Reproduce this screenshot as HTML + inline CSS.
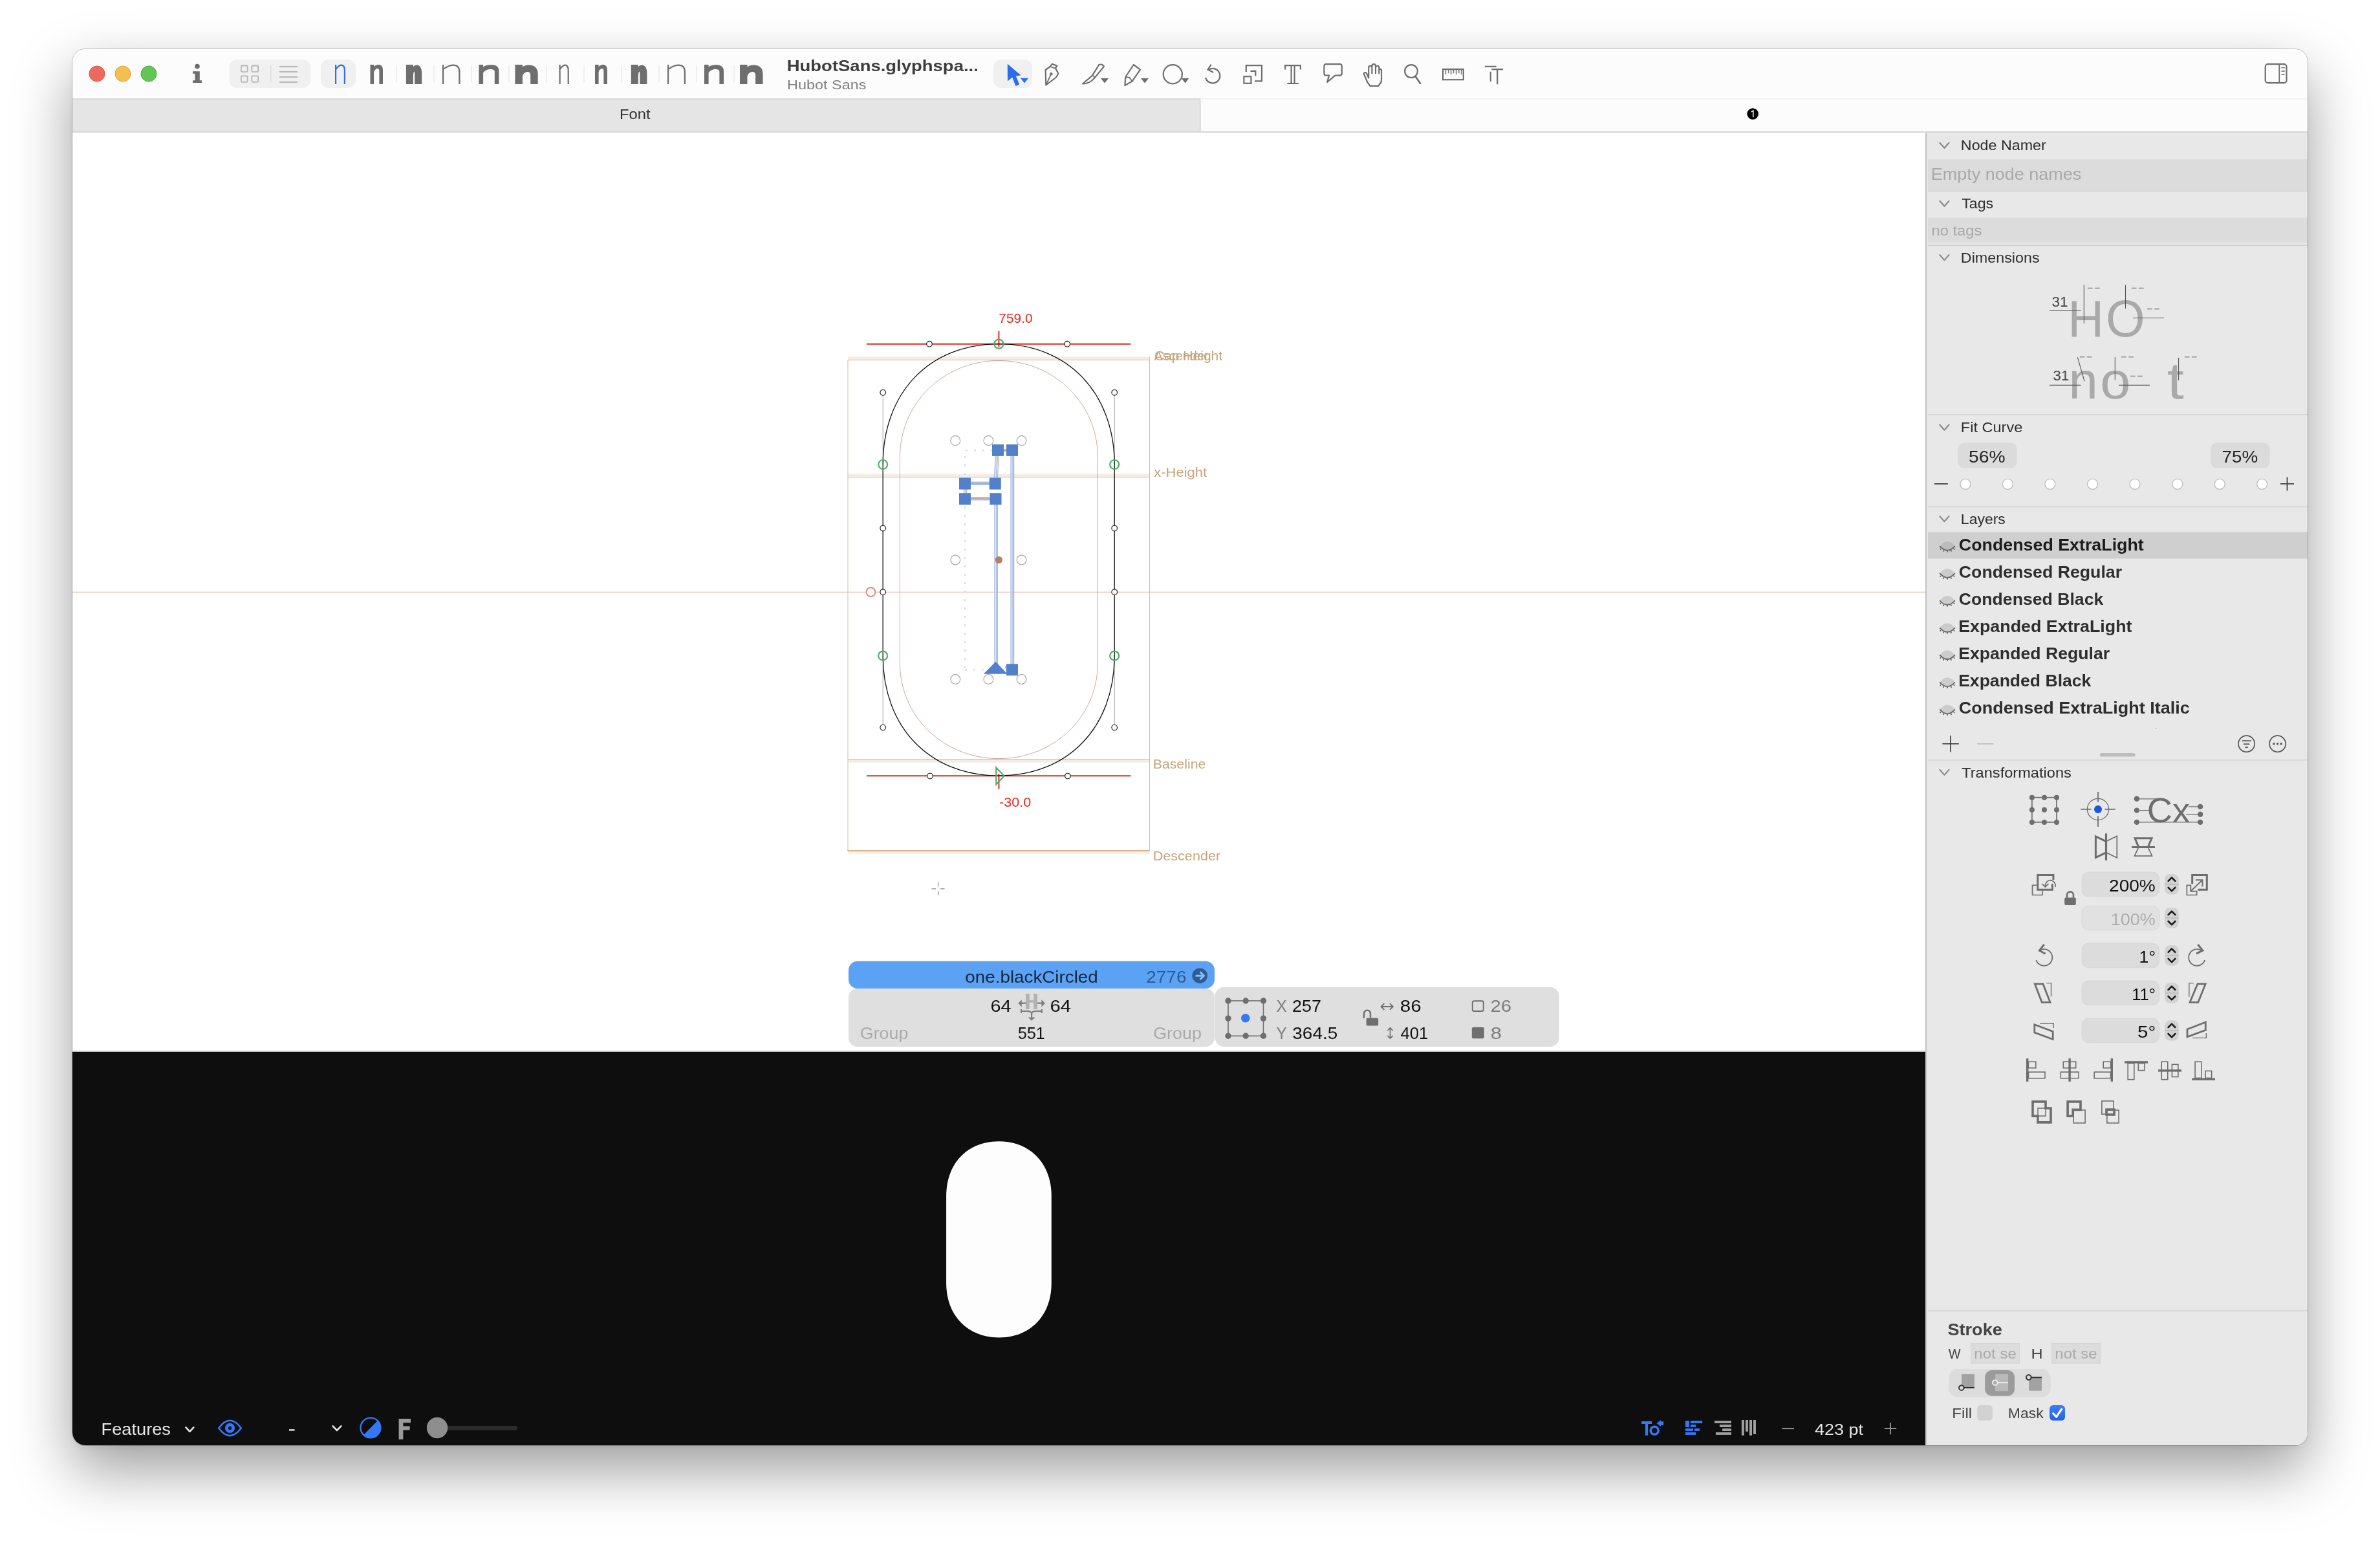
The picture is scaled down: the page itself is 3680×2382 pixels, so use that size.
<!DOCTYPE html>
<html><head><meta charset="utf-8"><title>Glyphs</title>
<style>
html,body{margin:0;padding:0;background:#fff;}
body{width:3680px;height:2382px;position:relative;overflow:hidden;font-family:"Liberation Sans",sans-serif;}
#shadow{position:absolute;left:112px;top:76px;width:3456px;height:2158px;border-radius:20px;
 box-shadow:0 0 0 1px rgba(0,0,0,0.20), 0 38px 90px rgba(0,0,0,0.39), 0 4px 8px rgba(0,0,0,0.05);background:#fcfcfc;}
svg{position:absolute;left:0;top:0;will-change:transform;font-family:"Liberation Sans",sans-serif;}
text{white-space:pre;}
</style></head><body>
<div id="shadow"></div>
<svg width="3680" height="2382" viewBox="0 0 3680 2382">
<defs><clipPath id="win"><rect x="112" y="76" width="3456" height="2158" rx="20"/></clipPath></defs>
<g clip-path="url(#win)">
<rect x="112" y="76" width="3456" height="2158" fill="#fcfcfc"/>
<rect x="112" y="152" width="1744" height="53" fill="#e5e5e5"/>
<rect x="112" y="152" width="1744" height="2" fill="#d9d9d9"/>
<rect x="1856" y="152" width="1712" height="1.5" fill="#efefef"/>
<rect x="1855" y="154" width="1.5" height="50" fill="#d0d0d0"/>
<rect x="112" y="203" width="3456" height="2" fill="#d6d6d6"/>
<rect x="112" y="205" width="2865" height="1419" fill="#ffffff"/>
<rect x="112" y="1624" width="2865" height="2" fill="#c4c4c4"/>
<rect x="112" y="1626" width="2865" height="608" fill="#0e0e0e"/>
<rect x="2977" y="205" width="2" height="2029" fill="#c2c2c2"/>
<rect x="2979" y="205" width="589" height="2029" fill="#e8e8e8"/>
<circle cx="150" cy="114" r="12" fill="#ed6a5e" stroke="#d5564a" stroke-width="1"/>
<circle cx="190" cy="114" r="12" fill="#f5bf4f" stroke="#d9a33b" stroke-width="1"/>
<circle cx="230" cy="114" r="12" fill="#62c554" stroke="#4faa3f" stroke-width="1"/>
<circle cx="305" cy="102.6" r="3.8" fill="#6e6e6e"/>
<path d="M298 110.2H308.8V124.3H312V128H298V124.3H301.5V113.8H298Z" fill="#6e6e6e"/>
<rect x="354.5" y="92" width="125.5" height="44" fill="#f0f0f0" rx="12"/>
<rect x="372.9" y="101.5" width="9.8" height="9.6" fill="none" rx="1.5" stroke="#b6b6b6" stroke-width="1.8"/>
<rect x="389.4" y="101.5" width="9.8" height="9.6" fill="none" rx="1.5" stroke="#b6b6b6" stroke-width="1.8"/>
<rect x="372.9" y="117.3" width="9.8" height="9.6" fill="none" rx="1.5" stroke="#b6b6b6" stroke-width="1.8"/>
<rect x="389.4" y="117.3" width="9.8" height="9.6" fill="none" rx="1.5" stroke="#b6b6b6" stroke-width="1.8"/>
<rect x="418" y="100.5" width="1.5" height="27" fill="#dedede"/>
<path d="M432 103L460 103" stroke="#b6b6b6" stroke-width="2" fill="none" />
<path d="M432 111L460 111" stroke="#b6b6b6" stroke-width="2" fill="none" />
<path d="M432 119L460 119" stroke="#b6b6b6" stroke-width="2" fill="none" />
<path d="M432 127L460 127" stroke="#b6b6b6" stroke-width="2" fill="none" />
<rect x="496" y="92" width="54" height="44" fill="#f0f0f0" rx="12"/>
<path d="M519.1 130V100M519.1 107.2C522.96 102.2 524.9 100.7 527.38 100.7C531.24 100.7 532.9 104.5 532.9 108.76V130" fill="none" stroke="#2a6ff0" stroke-width="2.2"/>
<path d="M572.5 130V100H578.1V103.2C581.58 99.2 592 97.5 592 108.1V130H586.4V109.6C586.4 104.2 579.76 105.2 578.1 111.6V130Z" fill="#6e6e6e"/>
<path d="M627.9 130V100H638.9V103.2C642.23 99.2 652.2 97.5 652.2 113.5V130H641.2V115C641.2 108.25 639.36 109.25 638.9 117V130Z" fill="#6e6e6e"/>
<path d="M685.1 130V100M685.1 107.2C692.18 102.2 695.73 100.7 700.28 100.7C707.36 100.7 710.4 104.5 710.4 111V130" fill="none" stroke="#6e6e6e" stroke-width="2.2"/>
<path d="M740.5 130V100H747.1V103.2C753.18 99.2 771.4 97.5 771.4 109.1V130H764.8V110.6C764.8 104.95 750.64 105.95 747.1 112.6V130Z" fill="#6e6e6e"/>
<path d="M796.4 130V100H807.9V103.2C813.85 99.2 831.7 97.5 831.7 114V130H820.2V115.5C820.2 108.62 810.36 109.62 807.9 117.5V130Z" fill="#6e6e6e"/>
<path d="M865.6 130V100M865.6 107.2C869.27 102.2 871.1 100.7 873.46 100.7C877.13 100.7 878.7 104.5 878.7 108.57V130" fill="none" stroke="#6e6e6e" stroke-width="2.2"/>
<path d="M920 130V100H925.6V103.2C928.95 99.2 939 97.5 939 108.1V130H933.4V109.6C933.4 104.2 927.16 105.2 925.6 111.6V130Z" fill="#6e6e6e"/>
<path d="M975.8 130V100H986.8V103.2C990.2 99.2 1000.4 97.5 1000.4 113.5V130H989.4V115C989.4 108.25 987.32 109.25 986.8 117V130Z" fill="#6e6e6e"/>
<path d="M1033.1 130V100M1033.1 107.2C1040.32 102.2 1043.94 100.7 1048.58 100.7C1055.8 100.7 1058.9 104.5 1058.9 111V130" fill="none" stroke="#6e6e6e" stroke-width="2.2"/>
<path d="M1089 130V100H1095.6V103.2C1101.45 99.2 1119 97.5 1119 109.1V130H1112.4V110.6C1112.4 104.95 1098.96 105.95 1095.6 112.6V130Z" fill="#6e6e6e"/>
<path d="M1144 130V100H1155.5V103.2C1161.53 99.2 1179.6 97.5 1179.6 114V130H1168.1V115.5C1168.1 108.62 1158.02 109.62 1155.5 117.5V130Z" fill="#6e6e6e"/>
<rect x="612.2" y="100.5" width="1.6" height="27" fill="#ececec"/>
<rect x="670.2" y="100.5" width="1.6" height="27" fill="#ececec"/>
<rect x="728.2" y="100.5" width="1.6" height="27" fill="#ececec"/>
<rect x="786.2" y="100.5" width="1.6" height="27" fill="#ececec"/>
<rect x="844.2" y="100.5" width="1.6" height="27" fill="#ececec"/>
<rect x="902.2" y="100.5" width="1.6" height="27" fill="#ececec"/>
<rect x="960.2" y="100.5" width="1.6" height="27" fill="#ececec"/>
<rect x="1018.2" y="100.5" width="1.6" height="27" fill="#ececec"/>
<rect x="1076.2" y="100.5" width="1.6" height="27" fill="#ececec"/>
<rect x="1134.2" y="100.5" width="1.6" height="27" fill="#ececec"/>
<text x="1216.71" y="109.8" font-size="24.5" fill="#3d3d3d" textLength="296.12" lengthAdjust="spacingAndGlyphs" font-weight="bold">HubotSans.glyphspa...</text>
<text x="1217.13" y="138.2" font-size="20.5" fill="#808080" textLength="122.21" lengthAdjust="spacingAndGlyphs">Hubot Sans</text>
<rect x="1536" y="92" width="60" height="44" fill="#f0f0f0" rx="12"/>
<path d="M1557.8 98.7L1558 125.6L1565.2 119.6L1570.6 133.1L1576.2 130.6L1570.8 117.6L1578.6 116.6Z" fill="#2a6cf0"/>
<path d="M1578 120.7H1590L1584 128.5Z" fill="#2a6cf0"/>
<path d="M1617.3 131.5L1616.6 108L1623.6 103L1626.8 98.9L1634.3 101.8L1632 105.6L1636.4 113.8L1633 119.5Z" fill="none" stroke="#6e6e6e" stroke-width="2.2" stroke-linejoin="round"/>
<path d="M1623.6 103L1632 105.6" fill="none" stroke="#6e6e6e" stroke-width="1.8"/>
<path d="M1617.6 131L1625 114.8" stroke="#6e6e6e" stroke-width="1.8" fill="none" />
<circle cx="1625.3" cy="114.2" r="2.3" fill="#6e6e6e"/>
<path d="M1699.4 100Q1704.5 98.4 1707 102.6L1692.3 120.6Q1685 129.4 1674 129.5L1688.6 117.2Z" fill="none" stroke="#6e6e6e" stroke-width="2.2" stroke-linejoin="round"/>
<path d="M1688.6 117.2Q1692 116.5 1692.3 120.6" fill="none" stroke="#6e6e6e" stroke-width="1.8"/>
<path d="M1702 121H1714L1708 128.5Z" fill="#6e6e6e"/>
<path d="M1752.8 100L1763 107.6L1750.6 125.6L1739.4 132L1740.3 119Z" fill="none" stroke="#6e6e6e" stroke-width="2.2" stroke-linejoin="round"/>
<path d="M1740.3 119L1746.6 120L1750.6 125.6" fill="none" stroke="#6e6e6e" stroke-width="1.8" stroke-linejoin="round"/>
<path d="M1764 121H1776L1770 128.5Z" fill="#6e6e6e"/>
<circle cx="1813.3" cy="114.75" r="14.6" fill="none" stroke="#6e6e6e" stroke-width="2.2"/>
<path d="M1826.8 121H1838.4L1832.6 128.5Z" fill="#6e6e6e"/>
<path d="M1868.04 108.3A11.3 11.3 0 1 1 1864.09 120.12" fill="none" stroke="#6e6e6e" stroke-width="2.2"/>
<path d="M1872.8 99.6L1867.6 107.6L1876.2 112" fill="none" stroke="#6e6e6e" stroke-width="2.2" stroke-linejoin="miter"/>
<rect x="1923.4" y="118.2" width="11" height="10.6" fill="none" stroke="#6e6e6e" stroke-width="2.2"/>
<path d="M1926.8 111V101.2H1951V125.4H1940" fill="none" stroke="#6e6e6e" stroke-width="2.2"/>
<path d="M1933.5 109.8H1941.3V117.6" fill="none" stroke="#6e6e6e" stroke-width="2.2"/>
<path d="M1987.1 107.6V101.2H2010.9V107.6M1996.6 101.2V129M2001.6 101.2V129M1990.4 129H2007.8" fill="none" stroke="#6e6e6e" stroke-width="2.2"/>
<path d="M2050.5 99.2H2071.5Q2074.8 99.2 2074.8 102.5V113.3Q2074.8 116.6 2071.5 116.6H2064.5L2052.2 126.8L2055 116.6H2050.5Q2047.4 116.6 2047.4 113.3V102.5Q2047.4 99.2 2050.5 99.2Z" fill="none" stroke="#6e6e6e" stroke-width="2.2" stroke-linejoin="round"/>
<path d="M2116.2 116V104.4a2.6 2.6 0 0 1 5.2 0V113.5M2121.4 104.4V102a2.8 2.8 0 0 1 5.6 0V113.5M2127 104.4a2.65 2.65 0 0 1 5.3 0V113.5M2132.3 108.8a1.85 1.85 0 0 1 3.7 0V123.5Q2136 128 2133.2 130L2131.6 132.8H2118.4L2114.2 127L2109.2 115Q2108.4 112.4 2110.6 112Q2112.6 111.8 2113.6 114.4L2116.2 120.5V116" fill="none" stroke="#6e6e6e" stroke-width="2.2" stroke-linejoin="round" stroke-linecap="round"/>
<circle cx="2182" cy="110.1" r="9.9" fill="none" stroke="#6e6e6e" stroke-width="2.2"/>
<path d="M2188.4 117.8L2196.6 129.8" stroke="#6e6e6e" stroke-width="2.6" fill="none" />
<rect x="2231.1" y="107" width="31.7" height="16.2" fill="none" stroke="#6e6e6e" stroke-width="2.2"/>
<path d="M2235.4 107L2235.4 115.3" stroke="#6e6e6e" stroke-width="1.5" fill="none" />
<path d="M2239.6 107L2239.6 113.2" stroke="#6e6e6e" stroke-width="1.5" fill="none" />
<path d="M2243.6 107L2243.6 115.3" stroke="#6e6e6e" stroke-width="1.5" fill="none" />
<path d="M2247.6 107L2247.6 113.2" stroke="#6e6e6e" stroke-width="1.5" fill="none" />
<path d="M2251.6 107L2251.6 115.3" stroke="#6e6e6e" stroke-width="1.5" fill="none" />
<path d="M2255.8 107L2255.8 113.2" stroke="#6e6e6e" stroke-width="1.5" fill="none" />
<path d="M2259.6 107L2259.6 115.3" stroke="#6e6e6e" stroke-width="1.5" fill="none" />
<path d="M2295.8 102.9H2313.6M2304.8 110.8V126M2306.3 107.2H2324.1M2315.2 107.2V130.2" fill="none" stroke="#6e6e6e" stroke-width="2.2"/>
<rect x="3502.7" y="99.2" width="32.8" height="29" fill="none" rx="4" stroke="#6e6e6e" stroke-width="2.2"/>
<path d="M3524.3 99L3524.3 128.4" stroke="#6e6e6e" stroke-width="1.8" fill="none" />
<path d="M3527.4 104.6L3532.8 104.6" stroke="#6e6e6e" stroke-width="1.4" fill="none" />
<path d="M3527.4 110L3532.8 110" stroke="#6e6e6e" stroke-width="1.4" fill="none" />
<path d="M3527.4 115.4L3532.8 115.4" stroke="#6e6e6e" stroke-width="1.4" fill="none" />
<text x="958.1" y="184" font-size="22.3" fill="#333" textLength="47.54" lengthAdjust="spacingAndGlyphs">Font</text>
<circle cx="2710.2" cy="176" r="8.8" fill="#000"/>
<path d="M2708 172.8L2710.8 171V181.2" fill="none" stroke="#fff" stroke-width="1.5"/>
<rect x="1311" y="551.3" width="466.5" height="4.8" fill="#f4ede6"/>
<rect x="1311" y="732.7" width="466.5" height="4.4" fill="#f4ede6"/>
<rect x="1311" y="1174" width="466.5" height="4.7" fill="#f4ede6"/>
<rect x="1311" y="1315.9" width="466.5" height="3.8" fill="#f4ede6"/>
<path d="M1311 556L1311 1314.9" stroke="#e6d3c0" stroke-width="1.6" fill="none" />
<path d="M1777.5 551.5L1777.5 1314.9" stroke="#dcc0a0" stroke-width="1.1" fill="none" />
<path d="M1310.5 556.5L1778 556.5" stroke="#d9b68e" stroke-width="1" fill="none" />
<path d="M1310.5 737.5L1778 737.5" stroke="#d9b68e" stroke-width="1" fill="none" />
<path d="M1310.5 1173.5L1778 1173.5" stroke="#d9b68e" stroke-width="1" fill="none" />
<path d="M1310.5 1314.9L1778 1314.9" stroke="#d4b28a" stroke-width="2" fill="none" />
<text x="1784.4" y="557.2" font-size="19.8" fill="#c7a37b" textLength="84.29" lengthAdjust="spacingAndGlyphs">Ascender</text>
<text x="1784.95" y="557.2" font-size="19.8" fill="#c7a37b" textLength="105.17" lengthAdjust="spacingAndGlyphs">Cap Height</text>
<text x="1784.18" y="737.2" font-size="19.8" fill="#c7a37b" textLength="81.96" lengthAdjust="spacingAndGlyphs">x-Height</text>
<text x="1782.7" y="1187.5" font-size="19.8" fill="#c7a37b" textLength="81.63" lengthAdjust="spacingAndGlyphs">Baseline</text>
<text x="1782.67" y="1329.7" font-size="19.8" fill="#c7a37b" textLength="104.48" lengthAdjust="spacingAndGlyphs">Descender</text>
<path d="M112 915.3L2977 915.3" stroke="#ecb0a3" stroke-width="1.1" fill="none" />
<circle cx="1346.5" cy="915.2" r="6.9" fill="#fff" stroke="#de8a7c" stroke-width="2"/>
<path d="M1340 531.7L1748.5 531.7" stroke="#e8291c" stroke-width="2" fill="none" />
<path d="M1544.4 512L1544.4 536" stroke="#e8291c" stroke-width="2" fill="none" />
<text x="1544.35" y="499.4" font-size="20.5" fill="#e8291c" textLength="52.33" lengthAdjust="spacingAndGlyphs">759.0</text>
<path d="M1340 1199.3L1748.5 1199.3" stroke="#e8291c" stroke-width="2" fill="none" />
<path d="M1544.4 1196L1544.4 1219.8" stroke="#e8291c" stroke-width="2" fill="none" />
<text x="1545.08" y="1246.6" font-size="20.5" fill="#e8291c" textLength="49.27" lengthAdjust="spacingAndGlyphs">-30.0</text>
<path d="M1391.5 706C1391.5 624 1458.4 557.5 1544.4 557.5C1630.4 557.5 1697.3 624 1697.3 706V1025.5C1697.3 1107 1630.4 1172.6 1544.4 1172.6C1458.4 1172.6 1391.5 1107 1391.5 1025.5Z" fill="none" stroke="#d2a5a1" stroke-width="1"/>
<path d="M1365.2 606.8L1365.2 718" stroke="#9a9a9a" stroke-width="0.9" fill="none" />
<path d="M1723.2 606.8L1723.2 718" stroke="#9a9a9a" stroke-width="0.9" fill="none" />
<path d="M1365.2 1013.6L1365.2 1124.6" stroke="#9a9a9a" stroke-width="0.9" fill="none" />
<path d="M1723.2 1013.6L1723.2 1124.6" stroke="#9a9a9a" stroke-width="0.9" fill="none" />
<path d="M1365.2 718C1365.2 606.8 1437 531.7 1544.4 531.7C1650.2 531.7 1723.2 606.8 1723.2 718V1013.6C1723.2 1124.6 1651 1199.1 1544.4 1199.1C1438 1199.1 1365.2 1124.6 1365.2 1013.6Z" fill="none" stroke="#111" stroke-width="1.3"/>
<circle cx="1437" cy="531.7" r="4.3" fill="#fff" stroke="#111" stroke-width="1.15"/>
<circle cx="1650.2" cy="531.7" r="4.3" fill="#fff" stroke="#111" stroke-width="1.15"/>
<circle cx="1365.2" cy="606.8" r="4.3" fill="#fff" stroke="#111" stroke-width="1.15"/>
<circle cx="1723.2" cy="606.8" r="4.3" fill="#fff" stroke="#111" stroke-width="1.15"/>
<circle cx="1365.2" cy="816.5" r="4.3" fill="#fff" stroke="#111" stroke-width="1.15"/>
<circle cx="1723.2" cy="816.5" r="4.3" fill="#fff" stroke="#111" stroke-width="1.15"/>
<circle cx="1365.2" cy="915.2" r="4.3" fill="#fff" stroke="#111" stroke-width="1.15"/>
<circle cx="1723.2" cy="915.2" r="4.3" fill="#fff" stroke="#111" stroke-width="1.15"/>
<circle cx="1365.2" cy="1124.6" r="4.3" fill="#fff" stroke="#111" stroke-width="1.15"/>
<circle cx="1723.2" cy="1124.6" r="4.3" fill="#fff" stroke="#111" stroke-width="1.15"/>
<circle cx="1438" cy="1199.5" r="4.3" fill="#fff" stroke="#111" stroke-width="1.15"/>
<circle cx="1651" cy="1199.5" r="4.3" fill="#fff" stroke="#111" stroke-width="1.15"/>
<circle cx="1544.4" cy="531.7" r="7" fill="none" stroke="#4caf6e" stroke-width="2.2"/>
<circle cx="1365.2" cy="718" r="7" fill="none" stroke="#4caf6e" stroke-width="2.2"/>
<circle cx="1723.2" cy="718" r="7" fill="none" stroke="#4caf6e" stroke-width="2.2"/>
<circle cx="1365.2" cy="1013.6" r="7" fill="none" stroke="#4caf6e" stroke-width="2.2"/>
<circle cx="1723.2" cy="1013.6" r="7" fill="none" stroke="#4caf6e" stroke-width="2.2"/>
<path d="M1540.3 1186.4L1552.6 1199.4L1540.3 1212.4Z" fill="none" stroke="#4caf6e" stroke-width="2.2"/>
<path d="M1491.9 705.2V1034M1493.1 696.1H1536M1492.2 1035.3H1524" fill="none" stroke="#cccccc" stroke-width="1.7" stroke-dasharray="2.6 10.4"/>
<path d="M1539.4 775L1539.4 1030" stroke="#aac1e4" stroke-width="4.3" fill="none" />
<path d="M1539.4 775L1539.4 1030" stroke="#dfe8f5" stroke-width="1.4" fill="none" />
<path d="M1542.35 775L1542.35 1030" stroke="#cfa496" stroke-width="1.1" fill="none" />
<path d="M1564.6 700L1564.6 1030" stroke="#aac1e4" stroke-width="4.6" fill="none" />
<path d="M1564.6 700L1564.6 1030" stroke="#dfe8f5" stroke-width="1.4" fill="none" />
<path d="M1567.7 700L1567.7 1030" stroke="#cfa496" stroke-width="1.1" fill="none" />
<path d="M1541.4 700L1538.6 742" stroke="#aac1e4" stroke-width="4.4" fill="none" />
<path d="M1541.4 700L1538.6 742" stroke="#dfe8f5" stroke-width="1.4" fill="none" />
<path d="M1544.5 700L1542.2 742" stroke="#cfa496" stroke-width="1" fill="none" />
<path d="M1498 747.2L1532 747.2" stroke="#aac1e4" stroke-width="5.4" fill="none" />
<path d="M1498 747.3L1532 747.3" stroke="#cfa496" stroke-width="1.2" fill="none" />
<path d="M1498 770.7L1532 770.7" stroke="#aac1e4" stroke-width="5.4" fill="none" />
<path d="M1498 770.8L1532 770.8" stroke="#cfa496" stroke-width="1.2" fill="none" />
<path d="M1551 696.2L1557 696.2" stroke="#aac1e4" stroke-width="4.5" fill="none" />
<path d="M1551 696.3L1557 696.3" stroke="#cfa496" stroke-width="1.2" fill="none" />
<path d="M1554 1031.5L1557 1031.5" stroke="#aac1e4" stroke-width="3" fill="none" />
<path d="M1492 755L1492 764" stroke="#aac1e4" stroke-width="4" fill="none" />
<path d="M1492 755L1492 764" stroke="#dfe8f5" stroke-width="1.4" fill="none" />
<path d="M1494.8 755L1494.8 764" stroke="#cfa496" stroke-width="1.1" fill="none" />
<circle cx="1477.3" cy="681.1" r="7.4" fill="#fff" stroke="#a9a9a9" stroke-width="1.2"/>
<circle cx="1477.3" cy="865.5" r="7.4" fill="#fff" stroke="#a9a9a9" stroke-width="1.2"/>
<circle cx="1477.3" cy="1050" r="7.4" fill="#fff" stroke="#a9a9a9" stroke-width="1.2"/>
<circle cx="1528.4" cy="681.1" r="7.4" fill="#fff" stroke="#a9a9a9" stroke-width="1.2"/>
<circle cx="1528.4" cy="1050" r="7.4" fill="#fff" stroke="#a9a9a9" stroke-width="1.2"/>
<circle cx="1579.5" cy="681.1" r="7.4" fill="#fff" stroke="#a9a9a9" stroke-width="1.2"/>
<circle cx="1579.5" cy="865.5" r="7.4" fill="#fff" stroke="#a9a9a9" stroke-width="1.2"/>
<circle cx="1579.5" cy="1050" r="7.4" fill="#fff" stroke="#a9a9a9" stroke-width="1.2"/>
<circle cx="1544.4" cy="865.5" r="5.6" fill="#b08462"/>
<rect x="1534" y="686.9" width="18" height="18" fill="#5380cb"/>
<rect x="1556" y="686.9" width="18" height="18" fill="#5380cb"/>
<rect x="1483" y="738.6" width="18" height="18" fill="#5380cb"/>
<rect x="1529.8" y="738.6" width="18" height="18" fill="#5380cb"/>
<rect x="1483" y="762.2" width="18" height="18" fill="#5380cb"/>
<rect x="1530.5" y="762.2" width="18" height="18" fill="#5380cb"/>
<rect x="1556" y="1026.3" width="18" height="18" fill="#5380cb"/>
<path d="M1520.7 1041.8L1539.5 1022.7L1557.7 1041.8Z" fill="#5380cb"/>
<path d="M1440.6 1373.9H1447M1454 1373.9H1460.6M1450.6 1364V1370.4M1450.6 1377.4V1383.8" fill="none" stroke="#8a8a8a" stroke-width="1.3"/>
<rect x="1312" y="1527.6" width="566" height="90.5" fill="#dfdfdf" rx="14"/>
<rect x="1878.6" y="1525.8" width="532.2" height="92.3" fill="#dfdfdf" rx="14"/>
<rect x="1312" y="1485.7" width="566" height="42.3" fill="#5ba2f4" rx="14"/>
<text x="1492.39" y="1518.5" font-size="26" fill="#16263c" textLength="205.36" lengthAdjust="spacingAndGlyphs">one.blackCircled</text>
<text x="1772.3" y="1518.5" font-size="26" fill="#2d5b96" textLength="62.15" lengthAdjust="spacingAndGlyphs">2776</text>
<circle cx="1855.2" cy="1508.2" r="11.8" fill="#2d5b96"/>
<path d="M1848.6 1508.2H1861M1855.6 1502.4L1861.4 1508.2L1855.6 1514" fill="none" stroke="#8bbcf3" stroke-width="3" stroke-linejoin="miter"/>
<text x="1531.56" y="1563.8" font-size="25.5" fill="#111" textLength="32" lengthAdjust="spacingAndGlyphs">64</text>
<text x="1623.53" y="1563.8" font-size="25.5" fill="#111" textLength="32.64" lengthAdjust="spacingAndGlyphs">64</text>
<text x="1574.11" y="1605.7" font-size="25.5" fill="#111" textLength="41.4" lengthAdjust="spacingAndGlyphs">551</text>
<text x="1329.86" y="1605.7" font-size="25.5" fill="#aaaaaa" textLength="74.46" lengthAdjust="spacingAndGlyphs">Group</text>
<text x="1783.15" y="1605.7" font-size="25.5" fill="#aaaaaa" textLength="74.98" lengthAdjust="spacingAndGlyphs">Group</text>
<rect x="1586.1" y="1536.1" width="5.7" height="23.9" fill="#b2b2b2"/>
<rect x="1598.3" y="1536.1" width="5.7" height="23.9" fill="#b2b2b2"/>
<rect x="1586.1" y="1546.2" width="17.9" height="3.4" fill="#b2b2b2"/>
<path d="M1574.3 1550.7L1579.8 1545.2V1549.6H1586.1V1551.8H1579.8V1556.5Z" fill="#7e7e7e"/>
<path d="M1616 1550.7L1610.4 1545.2V1549.6H1604V1551.8H1610.4V1556.5Z" fill="#7e7e7e"/>
<path d="M1579 1560.1V1565.9M1610.9 1560.1V1565.9" fill="none" stroke="#7e7e7e" stroke-width="2"/>
<path d="M1579 1563H1589Q1595.1 1563 1595.1 1567.6V1573M1610.9 1563H1601.2Q1595.1 1563 1595.1 1567.6" fill="none" stroke="#7e7e7e" stroke-width="2.2"/>
<path d="M1589.6 1572.4H1600.7L1595.1 1577.8Z" fill="#7e7e7e"/>
<rect x="1899" y="1547" width="54.5" height="54.3" fill="none" stroke="#6e6e6e" stroke-width="1.6"/>
<circle cx="1899" cy="1547" r="4.7" fill="#6e6e6e"/>
<circle cx="1899" cy="1574.1" r="4.7" fill="#6e6e6e"/>
<circle cx="1899" cy="1601.3" r="4.7" fill="#6e6e6e"/>
<circle cx="1926.2" cy="1547" r="4.7" fill="#6e6e6e"/>
<circle cx="1926.2" cy="1601.3" r="4.7" fill="#6e6e6e"/>
<circle cx="1953.5" cy="1547" r="4.7" fill="#6e6e6e"/>
<circle cx="1953.5" cy="1574.1" r="4.7" fill="#6e6e6e"/>
<circle cx="1953.5" cy="1601.3" r="4.7" fill="#6e6e6e"/>
<circle cx="1925.8" cy="1573.8" r="6.8" fill="#3478f6"/>
<text x="1973.45" y="1563.8" font-size="25.5" fill="#7c7c7c" textLength="16.22" lengthAdjust="spacingAndGlyphs">X</text>
<text x="1998.05" y="1563.8" font-size="25.5" fill="#111" textLength="45.06" lengthAdjust="spacingAndGlyphs">257</text>
<text x="1973.51" y="1605.7" font-size="25.5" fill="#7c7c7c" textLength="16.22" lengthAdjust="spacingAndGlyphs">Y</text>
<text x="1998.35" y="1605.7" font-size="25.5" fill="#111" textLength="69.86" lengthAdjust="spacingAndGlyphs">364.5</text>
<rect x="2112.6" y="1573.6" width="18.6" height="11.8" fill="#6e6e6e" rx="2"/>
<path d="M2109 1574V1567.6Q2109 1561.6 2114 1561.6Q2119 1561.6 2119 1567.6V1573" fill="none" stroke="#6e6e6e" stroke-width="2.4"/>
<path d="M2135.6 1556H2153.8M2140.4 1551.2L2135.6 1556L2140.4 1560.8M2149 1551.2L2153.8 1556L2149 1560.8" fill="none" stroke="#6e6e6e" stroke-width="1.9"/>
<text x="2164.74" y="1563.8" font-size="25.5" fill="#111" textLength="32.88" lengthAdjust="spacingAndGlyphs">86</text>
<path d="M2149.5 1589V1604.8M2145.4 1593L2149.5 1588.8L2153.6 1593M2145.4 1600.8L2149.5 1605L2153.6 1600.8" fill="none" stroke="#6e6e6e" stroke-width="1.7"/>
<text x="2165.42" y="1605.7" font-size="25.5" fill="#111" textLength="42.82" lengthAdjust="spacingAndGlyphs">401</text>
<rect x="2276.8" y="1547.3" width="17" height="15.6" fill="none" rx="2.5" stroke="#6e6e6e" stroke-width="2"/>
<text x="2304.54" y="1563.8" font-size="25.5" fill="#7c7c7c" textLength="32.47" lengthAdjust="spacingAndGlyphs">26</text>
<rect x="2275.8" y="1587.7" width="19" height="17.5" fill="#6e6e6e" rx="2.5"/>
<text x="2304.69" y="1605.7" font-size="25.5" fill="#7c7c7c" textLength="17.19" lengthAdjust="spacingAndGlyphs">8</text>
<path d="M1463.1 1848.87C1463.1 1798.33 1495.73 1764.2 1544.54 1764.2C1592.62 1764.2 1625.8 1798.33 1625.8 1848.87V1983.21C1625.8 2033.65 1592.99 2067.51 1544.54 2067.51C1496.19 2067.51 1463.1 2033.65 1463.1 1983.21Z" fill="#fdfdfd"/>
<path d="M2999.4 220.8L3006.4 228.8L3013.4 220.8" fill="none" stroke="#8a8a8a" stroke-width="2.2" stroke-linejoin="round" stroke-linecap="round"/>
<text x="3031.84" y="232.4" font-size="22.6" fill="#2e2e2e" textLength="131.95" lengthAdjust="spacingAndGlyphs">Node Namer</text>
<rect x="2981" y="246.3" width="587" height="48" fill="#dcdcdc"/>
<text x="2985.84" y="277.7" font-size="26" fill="#a9a9a9" textLength="232.53" lengthAdjust="spacingAndGlyphs">Empty node names</text>
<path d="M2981 295.2L3568 295.2" stroke="#cfcfcf" stroke-width="1.4" fill="none" />
<path d="M2999.4 310.8L3006.4 318.8L3013.4 310.8" fill="none" stroke="#8a8a8a" stroke-width="2.2" stroke-linejoin="round" stroke-linecap="round"/>
<text x="3033.24" y="322.4" font-size="22.6" fill="#2e2e2e" textLength="48.97" lengthAdjust="spacingAndGlyphs">Tags</text>
<rect x="2981" y="336.6" width="587" height="38.7" fill="#dcdcdc"/>
<text x="2986.46" y="363.7" font-size="22.6" fill="#a9a9a9" textLength="77.88" lengthAdjust="spacingAndGlyphs">no tags</text>
<path d="M2981 379.3L3568 379.3" stroke="#cfcfcf" stroke-width="1.4" fill="none" />
<path d="M2999.4 394.1L3006.4 402.1L3013.4 394.1" fill="none" stroke="#8a8a8a" stroke-width="2.2" stroke-linejoin="round" stroke-linecap="round"/>
<text x="3031.84" y="405.7" font-size="22.6" fill="#2e2e2e" textLength="121.76" lengthAdjust="spacingAndGlyphs">Dimensions</text>
<text x="3197.31" y="520" font-size="78.8" fill="#a9a9a9" textLength="55.85" lengthAdjust="spacingAndGlyphs">H</text>
<text x="3256.09" y="520" font-size="78.8" fill="#a9a9a9" textLength="60.64" lengthAdjust="spacingAndGlyphs">O</text>
<text x="3198.51" y="616.2" font-size="80" fill="#a9a9a9" textLength="45.27" lengthAdjust="spacingAndGlyphs">n</text>
<text x="3247.21" y="616.2" font-size="80" fill="#a9a9a9" textLength="47.07" lengthAdjust="spacingAndGlyphs">o</text>
<text x="3350.79" y="616.2" font-size="80" fill="#a9a9a9" textLength="26.11" lengthAdjust="spacingAndGlyphs">t</text>
<text x="3172.55" y="473.9" font-size="22.5" fill="#444" textLength="25.07" lengthAdjust="spacingAndGlyphs">31</text>
<text x="3174.15" y="588" font-size="22.5" fill="#444" textLength="25.18" lengthAdjust="spacingAndGlyphs">31</text>
<path d="M3169 479.5L3217.4 479.5" stroke="#555" stroke-width="1.1" fill="none" />
<path d="M3222.3 440.5L3222.3 500" stroke="#555" stroke-width="1.1" fill="none" />
<path d="M3286.5 440.5L3286.5 476.9" stroke="#555" stroke-width="1.1" fill="none" />
<path d="M3298 491.5L3346 491.5" stroke="#555" stroke-width="1.1" fill="none" />
<path d="M3169 595.4L3217.4 595.4" stroke="#555" stroke-width="1.1" fill="none" />
<path d="M3212.4 552.3L3223 589.4" stroke="#555" stroke-width="1.1" fill="none" />
<path d="M3270.3 552.3L3270.3 587" stroke="#555" stroke-width="1.1" fill="none" />
<path d="M3276 595.4L3324 595.4" stroke="#555" stroke-width="1.1" fill="none" />
<path d="M3368.6 553L3368.6 588" stroke="#555" stroke-width="1.1" fill="none" />
<path d="M3228 445.7L3235.6 445.7" stroke="#adadad" stroke-width="2.4" fill="none" />
<path d="M3239.2 445.7L3246.8 445.7" stroke="#adadad" stroke-width="2.4" fill="none" />
<path d="M3295.8 445.7L3303.4 445.7" stroke="#adadad" stroke-width="2.4" fill="none" />
<path d="M3307 445.7L3314.6 445.7" stroke="#adadad" stroke-width="2.4" fill="none" />
<path d="M3320 477.4L3327.6 477.4" stroke="#adadad" stroke-width="2.4" fill="none" />
<path d="M3331.2 477.4L3338.8 477.4" stroke="#adadad" stroke-width="2.4" fill="none" />
<path d="M3215.7 551.6L3223.3 551.6" stroke="#adadad" stroke-width="2.4" fill="none" />
<path d="M3226.9 551.6L3234.5 551.6" stroke="#adadad" stroke-width="2.4" fill="none" />
<path d="M3280 551.6L3287.6 551.6" stroke="#adadad" stroke-width="2.4" fill="none" />
<path d="M3291.2 551.6L3298.8 551.6" stroke="#adadad" stroke-width="2.4" fill="none" />
<path d="M3294 581.7L3301.6 581.7" stroke="#adadad" stroke-width="2.4" fill="none" />
<path d="M3305.2 581.7L3312.8 581.7" stroke="#adadad" stroke-width="2.4" fill="none" />
<path d="M3377.9 551.6L3385.5 551.6" stroke="#adadad" stroke-width="2.4" fill="none" />
<path d="M3389.1 551.6L3396.7 551.6" stroke="#adadad" stroke-width="2.4" fill="none" />
<path d="M2981 641L3568 641" stroke="#cfcfcf" stroke-width="1.4" fill="none" />
<path d="M2999.4 656.7L3006.4 664.7L3013.4 656.7" fill="none" stroke="#8a8a8a" stroke-width="2.2" stroke-linejoin="round" stroke-linecap="round"/>
<text x="3031.82" y="668.3" font-size="22.6" fill="#2e2e2e" textLength="95.51" lengthAdjust="spacingAndGlyphs">Fit Curve</text>
<rect x="3027" y="684.3" width="91.6" height="39.3" fill="#dbdbdb" rx="10"/>
<text x="3044.07" y="714.5" font-size="26" fill="#222" textLength="56.59" lengthAdjust="spacingAndGlyphs">56%</text>
<rect x="3418" y="684.3" width="91.6" height="39.3" fill="#dbdbdb" rx="10"/>
<text x="3435.61" y="714.5" font-size="26" fill="#222" textLength="55.64" lengthAdjust="spacingAndGlyphs">75%</text>
<path d="M2991 747.9L3011.8 747.9" stroke="#444" stroke-width="1.8" fill="none" />
<circle cx="3039" cy="748.3" r="8" fill="#fff" stroke="#bdbdbd" stroke-width="1.3"/>
<circle cx="3104.4" cy="748.3" r="8" fill="#fff" stroke="#bdbdbd" stroke-width="1.3"/>
<circle cx="3169.8" cy="748.3" r="8" fill="#fff" stroke="#bdbdbd" stroke-width="1.3"/>
<circle cx="3235.6" cy="748.3" r="8" fill="#fff" stroke="#bdbdbd" stroke-width="1.3"/>
<circle cx="3301" cy="748.3" r="8" fill="#fff" stroke="#bdbdbd" stroke-width="1.3"/>
<circle cx="3366.8" cy="748.3" r="8" fill="#fff" stroke="#bdbdbd" stroke-width="1.3"/>
<circle cx="3432.2" cy="748.3" r="8" fill="#fff" stroke="#bdbdbd" stroke-width="1.3"/>
<circle cx="3497.6" cy="748.3" r="8" fill="#fff" stroke="#bdbdbd" stroke-width="1.3"/>
<path d="M3526 747.9H3547M3536.5 737.4V758.4" fill="none" stroke="#444" stroke-width="1.8"/>
<path d="M2981 783.5L3568 783.5" stroke="#cfcfcf" stroke-width="1.4" fill="none" />
<path d="M2999.4 798.1L3006.4 806.1L3013.4 798.1" fill="none" stroke="#8a8a8a" stroke-width="2.2" stroke-linejoin="round" stroke-linecap="round"/>
<text x="3031.86" y="809.7" font-size="22.6" fill="#2e2e2e" textLength="69.02" lengthAdjust="spacingAndGlyphs">Layers</text>
<rect x="2981" y="822.4" width="587" height="41.1" fill="#cfcfcf"/>
<text x="3028.83" y="850.8" font-size="25.6" fill="#1c1c1c" textLength="285.95" lengthAdjust="spacingAndGlyphs" font-weight="bold">Condensed ExtraLight</text>
<path d="M2999.2 844.1Q3011 829.7 3022.8 844.1Q3011 857.3 2999.2 844.1Z" fill="#bcbcbc"/>
<path d="M2999.2 844.1Q3011 857.3 3022.8 844.1" fill="none" stroke="#666" stroke-width="1.8"/>
<path d="M3000.8 847.8L2999.9 849.6" stroke="#666" stroke-width="1.8" fill="none" />
<path d="M3005.4 850.4L3004.7 852.6" stroke="#666" stroke-width="1.8" fill="none" />
<path d="M3010.9 850.9L3010.9 853.6" stroke="#666" stroke-width="1.8" fill="none" />
<path d="M3016.4 850.4L3017.2 852.6" stroke="#666" stroke-width="1.8" fill="none" />
<path d="M3021 847.8L3021.9 849.6" stroke="#666" stroke-width="1.8" fill="none" />
<text x="3028.83" y="892.88" font-size="25.6" fill="#2e2e2e" textLength="252.23" lengthAdjust="spacingAndGlyphs" font-weight="bold">Condensed Regular</text>
<path d="M2999.2 886.18Q3011 871.78 3022.8 886.18Q3011 899.38 2999.2 886.18Z" fill="#cccccc"/>
<path d="M2999.2 886.18Q3011 899.38 3022.8 886.18" fill="none" stroke="#666" stroke-width="1.8"/>
<path d="M3000.8 889.88L2999.9 891.68" stroke="#666" stroke-width="1.8" fill="none" />
<path d="M3005.4 892.48L3004.7 894.68" stroke="#666" stroke-width="1.8" fill="none" />
<path d="M3010.9 892.98L3010.9 895.68" stroke="#666" stroke-width="1.8" fill="none" />
<path d="M3016.4 892.48L3017.2 894.68" stroke="#666" stroke-width="1.8" fill="none" />
<path d="M3021 889.88L3021.9 891.68" stroke="#666" stroke-width="1.8" fill="none" />
<text x="3028.83" y="934.96" font-size="25.6" fill="#2e2e2e" textLength="223.44" lengthAdjust="spacingAndGlyphs" font-weight="bold">Condensed Black</text>
<path d="M2999.2 928.26Q3011 913.86 3022.8 928.26Q3011 941.46 2999.2 928.26Z" fill="#cccccc"/>
<path d="M2999.2 928.26Q3011 941.46 3022.8 928.26" fill="none" stroke="#666" stroke-width="1.8"/>
<path d="M3000.8 931.96L2999.9 933.76" stroke="#666" stroke-width="1.8" fill="none" />
<path d="M3005.4 934.56L3004.7 936.76" stroke="#666" stroke-width="1.8" fill="none" />
<path d="M3010.9 935.06L3010.9 937.76" stroke="#666" stroke-width="1.8" fill="none" />
<path d="M3016.4 934.56L3017.2 936.76" stroke="#666" stroke-width="1.8" fill="none" />
<path d="M3021 931.96L3021.9 933.76" stroke="#666" stroke-width="1.8" fill="none" />
<text x="3028.16" y="977.04" font-size="25.6" fill="#2e2e2e" textLength="268.39" lengthAdjust="spacingAndGlyphs" font-weight="bold">Expanded ExtraLight</text>
<path d="M2999.2 970.34Q3011 955.94 3022.8 970.34Q3011 983.54 2999.2 970.34Z" fill="#cccccc"/>
<path d="M2999.2 970.34Q3011 983.54 3022.8 970.34" fill="none" stroke="#666" stroke-width="1.8"/>
<path d="M3000.8 974.04L2999.9 975.84" stroke="#666" stroke-width="1.8" fill="none" />
<path d="M3005.4 976.64L3004.7 978.84" stroke="#666" stroke-width="1.8" fill="none" />
<path d="M3010.9 977.14L3010.9 979.84" stroke="#666" stroke-width="1.8" fill="none" />
<path d="M3016.4 976.64L3017.2 978.84" stroke="#666" stroke-width="1.8" fill="none" />
<path d="M3021 974.04L3021.9 975.84" stroke="#666" stroke-width="1.8" fill="none" />
<text x="3028.17" y="1019.12" font-size="25.6" fill="#2e2e2e" textLength="234.03" lengthAdjust="spacingAndGlyphs" font-weight="bold">Expanded Regular</text>
<path d="M2999.2 1012.42Q3011 998.02 3022.8 1012.42Q3011 1025.62 2999.2 1012.42Z" fill="#cccccc"/>
<path d="M2999.2 1012.42Q3011 1025.62 3022.8 1012.42" fill="none" stroke="#666" stroke-width="1.8"/>
<path d="M3000.8 1016.12L2999.9 1017.92" stroke="#666" stroke-width="1.8" fill="none" />
<path d="M3005.4 1018.72L3004.7 1020.92" stroke="#666" stroke-width="1.8" fill="none" />
<path d="M3010.9 1019.22L3010.9 1021.92" stroke="#666" stroke-width="1.8" fill="none" />
<path d="M3016.4 1018.72L3017.2 1020.92" stroke="#666" stroke-width="1.8" fill="none" />
<path d="M3021 1016.12L3021.9 1017.92" stroke="#666" stroke-width="1.8" fill="none" />
<text x="3028.17" y="1061.2" font-size="25.6" fill="#2e2e2e" textLength="205.17" lengthAdjust="spacingAndGlyphs" font-weight="bold">Expanded Black</text>
<path d="M2999.2 1054.5Q3011 1040.1 3022.8 1054.5Q3011 1067.7 2999.2 1054.5Z" fill="#cccccc"/>
<path d="M2999.2 1054.5Q3011 1067.7 3022.8 1054.5" fill="none" stroke="#666" stroke-width="1.8"/>
<path d="M3000.8 1058.2L2999.9 1060" stroke="#666" stroke-width="1.8" fill="none" />
<path d="M3005.4 1060.8L3004.7 1063" stroke="#666" stroke-width="1.8" fill="none" />
<path d="M3010.9 1061.3L3010.9 1064" stroke="#666" stroke-width="1.8" fill="none" />
<path d="M3016.4 1060.8L3017.2 1063" stroke="#666" stroke-width="1.8" fill="none" />
<path d="M3021 1058.2L3021.9 1060" stroke="#666" stroke-width="1.8" fill="none" />
<text x="3028.82" y="1103.28" font-size="25.6" fill="#2e2e2e" textLength="356.98" lengthAdjust="spacingAndGlyphs" font-weight="bold">Condensed ExtraLight Italic</text>
<path d="M2999.2 1096.58Q3011 1082.18 3022.8 1096.58Q3011 1109.78 2999.2 1096.58Z" fill="#cccccc"/>
<path d="M2999.2 1096.58Q3011 1109.78 3022.8 1096.58" fill="none" stroke="#666" stroke-width="1.8"/>
<path d="M3000.8 1100.28L2999.9 1102.08" stroke="#666" stroke-width="1.8" fill="none" />
<path d="M3005.4 1102.88L3004.7 1105.08" stroke="#666" stroke-width="1.8" fill="none" />
<path d="M3010.9 1103.38L3010.9 1106.08" stroke="#666" stroke-width="1.8" fill="none" />
<path d="M3016.4 1102.88L3017.2 1105.08" stroke="#666" stroke-width="1.8" fill="none" />
<path d="M3021 1100.28L3021.9 1102.08" stroke="#666" stroke-width="1.8" fill="none" />
<rect x="3332.5" y="1125" width="2" height="1" fill="#999"/>
<path d="M3003.4 1149.8H3028.9M3016.1 1137.1V1162.5" fill="none" stroke="#333" stroke-width="1.6"/>
<path d="M3057.2 1149.8L3082.6 1149.8" stroke="#bdbdbd" stroke-width="1.6" fill="none" />
<circle cx="3473.6" cy="1149.8" r="12.6" fill="none" stroke="#555" stroke-width="1.7"/>
<path d="M3466.6 1145.2H3480.6M3469 1150.2H3478.2M3471.4 1155.2H3475.8" fill="none" stroke="#555" stroke-width="1.7"/>
<circle cx="3521.6" cy="1149.8" r="12.6" fill="none" stroke="#555" stroke-width="1.7"/>
<circle cx="3516" cy="1149.8" r="1.7" fill="#555"/>
<circle cx="3521.6" cy="1149.8" r="1.7" fill="#555"/>
<circle cx="3527.2" cy="1149.8" r="1.7" fill="#555"/>
<rect x="3246.9" y="1164" width="54.8" height="5.4" fill="#bdbdbd" rx="2.7"/>
<path d="M2981 1174.9L3568 1174.9" stroke="#cfcfcf" stroke-width="1.4" fill="none" />
<path d="M2999.4 1189.9L3006.4 1197.9L3013.4 1189.9" fill="none" stroke="#8a8a8a" stroke-width="2.2" stroke-linejoin="round" stroke-linecap="round"/>
<text x="3033.23" y="1201.5" font-size="22.6" fill="#2e2e2e" textLength="169.6" lengthAdjust="spacingAndGlyphs">Transformations</text>
<rect x="3141.9" y="1232.7" width="38.1" height="38.2" fill="none" stroke="#6e6e6e" stroke-width="1.7"/>
<circle cx="3141.9" cy="1232.7" r="4" fill="#6e6e6e"/>
<circle cx="3141.9" cy="1251.8" r="4" fill="#6e6e6e"/>
<circle cx="3141.9" cy="1270.9" r="4" fill="#6e6e6e"/>
<circle cx="3161" cy="1232.7" r="4" fill="#6e6e6e"/>
<circle cx="3161" cy="1251.8" r="4" fill="#6e6e6e"/>
<circle cx="3161" cy="1270.9" r="4" fill="#6e6e6e"/>
<circle cx="3180" cy="1232.7" r="4" fill="#6e6e6e"/>
<circle cx="3180" cy="1251.8" r="4" fill="#6e6e6e"/>
<circle cx="3180" cy="1270.9" r="4" fill="#6e6e6e"/>
<circle cx="3244" cy="1250.9" r="16.6" fill="none" stroke="#6e6e6e" stroke-width="1.3"/>
<path d="M3244 1224.1V1239.9M3244 1261.4V1277.9M3217.1 1250.9H3233.6M3254.5 1250.9H3270.9" fill="none" stroke="#6e6e6e" stroke-width="1.8"/>
<circle cx="3244" cy="1250.9" r="6" fill="#1d56db"/>
<circle cx="3303.9" cy="1234.8" r="4.2" fill="#6e6e6e"/>
<circle cx="3303.9" cy="1252.6" r="4.2" fill="#6e6e6e"/>
<circle cx="3303.9" cy="1270.9" r="4.2" fill="#6e6e6e"/>
<circle cx="3402.1" cy="1246.9" r="4.2" fill="#6e6e6e"/>
<circle cx="3402.1" cy="1258.7" r="4.2" fill="#6e6e6e"/>
<circle cx="3402.1" cy="1270.9" r="4.2" fill="#6e6e6e"/>
<path d="M3303.9 1234.8H3336M3303.9 1252.6H3324M3303.9 1270.9H3402.1M3384 1246.9H3402.1M3380 1258.7H3402.1" fill="none" stroke="#6e6e6e" stroke-width="1.2"/>
<text x="3319.69" y="1270.9" font-size="53" fill="#6e6e6e" textLength="66.34" lengthAdjust="spacingAndGlyphs">Cx</text>
<path d="M3256.5 1288.3L3256.5 1330" stroke="#6e6e6e" stroke-width="3.2" fill="none" />
<path d="M3256.5 1300.6L3240.4 1292.8V1325.6L3256.5 1317.8" fill="none" stroke="#6e6e6e" stroke-width="3"/>
<path d="M3256.5 1300.6L3273.3 1292.4V1326L3256.5 1317.8" fill="none" stroke="#6e6e6e" stroke-width="1.7"/>
<path d="M3296.1 1309.5L3332 1309.5" stroke="#6e6e6e" stroke-width="3.2" fill="none" />
<path d="M3306.8 1309.5L3301 1295.7H3327L3321.2 1309.5" fill="none" stroke="#6e6e6e" stroke-width="3"/>
<path d="M3306.8 1309.5L3300.4 1323.1H3327.6L3321.2 1309.5" fill="none" stroke="#6e6e6e" stroke-width="1.7"/>
<rect x="3219.2" y="1348" width="119.4" height="37.8" fill="#dcdcdc" rx="10" stroke="#d6d6d6" stroke-width="1"/>
<text x="3261.1" y="1377.9" font-size="25.6" fill="#111" textLength="71.69" lengthAdjust="spacingAndGlyphs">200%</text>
<rect x="3347.2" y="1351.1" width="21.5" height="31.6" fill="#d2d2d2" rx="8"/>
<path d="M3347.2 1366.9L3368.7 1366.9" stroke="#bebebe" stroke-width="1.6" fill="none" />
<path d="M3352.6 1361.9L3358 1356.5L3363.4 1361.9M3352.6 1371.9L3358 1377.3L3363.4 1371.9" fill="none" stroke="#1a1a1a" stroke-width="2.5" stroke-linecap="round" stroke-linejoin="round"/>
<rect x="3219.2" y="1400.5" width="119.4" height="37.4" fill="#e1e1e1" rx="10" stroke="#d6d6d6" stroke-width="1"/>
<text x="3263.88" y="1429.9" font-size="25.6" fill="#adadad" textLength="68.87" lengthAdjust="spacingAndGlyphs">100%</text>
<rect x="3347.2" y="1403.2" width="21.5" height="31.6" fill="#d2d2d2" rx="8"/>
<path d="M3347.2 1419L3368.7 1419" stroke="#bebebe" stroke-width="1.6" fill="none" />
<path d="M3352.6 1414L3358 1408.6L3363.4 1414M3352.6 1424L3358 1429.4L3363.4 1424" fill="none" stroke="#1a1a1a" stroke-width="2.5" stroke-linecap="round" stroke-linejoin="round"/>
<rect x="3219.2" y="1458" width="119.4" height="37.8" fill="#dcdcdc" rx="10" stroke="#d6d6d6" stroke-width="1"/>
<text x="3307.61" y="1487.9" font-size="25.6" fill="#111" textLength="25.42" lengthAdjust="spacingAndGlyphs">1°</text>
<rect x="3347.2" y="1461.1" width="21.5" height="31.6" fill="#d2d2d2" rx="8"/>
<path d="M3347.2 1476.9L3368.7 1476.9" stroke="#bebebe" stroke-width="1.6" fill="none" />
<path d="M3352.6 1471.9L3358 1466.5L3363.4 1471.9M3352.6 1481.9L3358 1487.3L3363.4 1481.9" fill="none" stroke="#1a1a1a" stroke-width="2.5" stroke-linecap="round" stroke-linejoin="round"/>
<rect x="3219.2" y="1516" width="119.4" height="37.6" fill="#dcdcdc" rx="10" stroke="#d6d6d6" stroke-width="1"/>
<text x="3296.29" y="1545.9" font-size="25.6" fill="#111" textLength="36.66" lengthAdjust="spacingAndGlyphs">11°</text>
<rect x="3347.2" y="1519.2" width="21.5" height="31.6" fill="#d2d2d2" rx="8"/>
<path d="M3347.2 1535L3368.7 1535" stroke="#bebebe" stroke-width="1.6" fill="none" />
<path d="M3352.6 1530L3358 1524.6L3363.4 1530M3352.6 1540L3358 1545.4L3363.4 1540" fill="none" stroke="#1a1a1a" stroke-width="2.5" stroke-linecap="round" stroke-linejoin="round"/>
<rect x="3219.2" y="1574.1" width="119.4" height="37.6" fill="#dcdcdc" rx="10" stroke="#d6d6d6" stroke-width="1"/>
<text x="3305.02" y="1604" font-size="25.6" fill="#111" textLength="28.18" lengthAdjust="spacingAndGlyphs">5°</text>
<rect x="3347.2" y="1577.2" width="21.5" height="31.6" fill="#d2d2d2" rx="8"/>
<path d="M3347.2 1593L3368.7 1593" stroke="#bebebe" stroke-width="1.6" fill="none" />
<path d="M3352.6 1588L3358 1582.6L3363.4 1588M3352.6 1598L3358 1603.4L3363.4 1598" fill="none" stroke="#1a1a1a" stroke-width="2.5" stroke-linecap="round" stroke-linejoin="round"/>
<path d="M3174.9 1360V1352.6H3150.8V1375.2H3173.4V1366" fill="none" stroke="#6e6e6e" stroke-width="3"/>
<path d="M3149 1368.3H3142.5V1383.5H3158V1376.8" fill="none" stroke="#6e6e6e" stroke-width="1.7"/>
<path d="M3178.2 1370.8A7.9 8.6 0 0 0 3162.4 1368V1370" fill="none" stroke="#6e6e6e" stroke-width="1.7"/>
<path d="M3157.4 1366.2L3162.4 1371L3167.4 1366.2" fill="none" stroke="#6e6e6e" stroke-width="1.8"/>
<rect x="3192.2" y="1387.4" width="17.6" height="11.6" fill="#6e6e6e" rx="2"/>
<path d="M3196 1388V1383.4A5 5 0 0 1 3206 1383.4V1388" fill="none" stroke="#6e6e6e" stroke-width="2.6"/>
<path d="M3389.7 1366.6V1352.6H3412.3V1375.2H3398.4" fill="none" stroke="#6e6e6e" stroke-width="3"/>
<path d="M3388 1368.3H3381.4V1383.5H3396.6V1377" fill="none" stroke="#6e6e6e" stroke-width="1.7"/>
<path d="M3387.4 1377.5L3405.2 1360.4M3394.8 1360.2H3405.4V1370.6M3387.2 1368.4V1377.8H3397.2" fill="none" stroke="#6e6e6e" stroke-width="2"/>
<path d="M3153.72 1469.14A12.8 12.8 0 1 1 3148.33 1483.96" fill="none" stroke="#6e6e6e" stroke-width="1.8"/>
<path d="M3160.6 1460L3153.4 1469.2L3162.6 1474.2" fill="none" stroke="#6e6e6e" stroke-width="3"/>
<path d="M3403.78 1469.14A12.8 12.8 0 1 0 3409.17 1483.96" fill="none" stroke="#6e6e6e" stroke-width="1.8"/>
<path d="M3398.4 1460L3405.8 1469.2L3396 1474.2" fill="none" stroke="#6e6e6e" stroke-width="3"/>
<path d="M3146.3 1520.8H3158.9L3170 1549.3H3157.2Z" fill="none" stroke="#6e6e6e" stroke-width="2.8"/>
<path d="M3164.4 1519.6H3171.5V1540.5" fill="none" stroke="#6e6e6e" stroke-width="1.4"/>
<path d="M3398 1520.8H3410.2L3398.8 1549.3H3386Z" fill="none" stroke="#6e6e6e" stroke-width="2.8"/>
<path d="M3391.6 1519.6H3384.8V1540.7" fill="none" stroke="#6e6e6e" stroke-width="1.4"/>
<path d="M3145.8 1583.8L3174.2 1594.4V1606.6L3145.8 1596Z" fill="none" stroke="#6e6e6e" stroke-width="2.8"/>
<path d="M3154.3 1581.7H3175.2V1588.9" fill="none" stroke="#6e6e6e" stroke-width="1.4"/>
<path d="M3382 1591L3410.3 1580V1592.2L3382 1602.8Z" fill="none" stroke="#6e6e6e" stroke-width="2.8"/>
<path d="M3411.3 1596.9V1604.4H3390.2" fill="none" stroke="#6e6e6e" stroke-width="1.4"/>
<rect x="3133" y="1636.1" width="3.4" height="35.7" fill="#6e6e6e"/>
<rect x="3136.4" y="1641.2" width="11.4" height="9.6" fill="none" stroke="#6e6e6e" stroke-width="1.6"/>
<rect x="3136.4" y="1657.1" width="25.6" height="9.6" fill="none" stroke="#6e6e6e" stroke-width="1.6"/>
<rect x="3198.4" y="1636.1" width="3.4" height="35.7" fill="#6e6e6e"/>
<rect x="3190.3" y="1641.2" width="19.4" height="9.6" fill="none" stroke="#6e6e6e" stroke-width="1.6"/>
<rect x="3186.3" y="1657.1" width="27.7" height="9.6" fill="none" stroke="#6e6e6e" stroke-width="1.6"/>
<rect x="3263.6" y="1636.1" width="3.4" height="35.7" fill="#6e6e6e"/>
<rect x="3252.2" y="1641.2" width="11.4" height="9.6" fill="none" stroke="#6e6e6e" stroke-width="1.6"/>
<rect x="3238.2" y="1657.1" width="25.4" height="9.6" fill="none" stroke="#6e6e6e" stroke-width="1.6"/>
<rect x="3285.1" y="1640.2" width="35.9" height="3.4" fill="#6e6e6e"/>
<rect x="3290.2" y="1643.6" width="9.6" height="25.1" fill="none" stroke="#6e6e6e" stroke-width="1.6"/>
<rect x="3306.3" y="1643.6" width="9.6" height="11" fill="none" stroke="#6e6e6e" stroke-width="1.6"/>
<rect x="3337.1" y="1653.2" width="35.9" height="3.4" fill="#6e6e6e"/>
<rect x="3342.2" y="1641.2" width="9.6" height="27.5" fill="none" stroke="#6e6e6e" stroke-width="1.6"/>
<rect x="3358.4" y="1645.3" width="9.5" height="19.2" fill="none" stroke="#6e6e6e" stroke-width="1.6"/>
<rect x="3389.2" y="1666.4" width="35.7" height="3.4" fill="#6e6e6e"/>
<rect x="3394.1" y="1641.2" width="9.7" height="25.2" fill="none" stroke="#6e6e6e" stroke-width="1.6"/>
<rect x="3410.1" y="1655.4" width="9.6" height="11" fill="none" stroke="#6e6e6e" stroke-width="1.6"/>
<path d="M3143 1702.9H3163V1713H3171V1734.9H3151V1725.1H3143Z" fill="none" stroke="#6e6e6e" stroke-width="3.6"/>
<path d="M3163 1713V1725.1H3151V1713Z" fill="none" stroke="#6e6e6e" stroke-width="1.5"/>
<path d="M3197.1 1702.9H3217V1715.4H3205.2V1725.1H3197.1Z" fill="none" stroke="#6e6e6e" stroke-width="3.6"/>
<rect x="3206.1" y="1715.9" width="18" height="20" fill="none" stroke="#6e6e6e" stroke-width="1.6"/>
<rect x="3249.9" y="1701.9" width="18.1" height="20.2" fill="none" stroke="#6e6e6e" stroke-width="1.6"/>
<rect x="3257.9" y="1716" width="18.2" height="19.9" fill="none" stroke="#6e6e6e" stroke-width="1.6"/>
<rect x="3256.9" y="1715" width="12.2" height="8.1" fill="none" stroke="#6e6e6e" stroke-width="3.4"/>
<path d="M2981 2026.3L3568 2026.3" stroke="#cfcfcf" stroke-width="1.4" fill="none" />
<text x="3011.45" y="2063.6" font-size="25.6" fill="#444" textLength="84.39" lengthAdjust="spacingAndGlyphs" font-weight="bold">Stroke</text>
<text x="3012.85" y="2100" font-size="21.8" fill="#444" textLength="18.88" lengthAdjust="spacingAndGlyphs">W</text>
<rect x="3047.6" y="2076.6" width="74.7" height="30.6" fill="#dcdcdc" stroke="#d3d3d3" stroke-width="1"/>
<text x="3052.34" y="2100" font-size="22.4" fill="#aaaaaa" textLength="65.42" lengthAdjust="spacingAndGlyphs">not se</text>
<text x="3140.59" y="2100" font-size="21.8" fill="#444" textLength="18.1" lengthAdjust="spacingAndGlyphs">H</text>
<rect x="3172.7" y="2076.6" width="74.7" height="30.6" fill="#dcdcdc" stroke="#d3d3d3" stroke-width="1"/>
<text x="3177.35" y="2100" font-size="22.4" fill="#aaaaaa" textLength="65.11" lengthAdjust="spacingAndGlyphs">not se</text>
<rect x="3013.1" y="2116.1" width="157.7" height="43.6" fill="#dcdcdc" rx="14"/>
<rect x="3069.1" y="2118.1" width="45.9" height="39.6" fill="#9b9b9b" rx="11"/>
<rect x="3033" y="2124.1" width="19.9" height="20.2" fill="#a2a2a2"/>
<path d="M3036 2145L3052.9 2145" stroke="#333" stroke-width="2.2" fill="none" />
<circle cx="3032.8" cy="2145.2" r="3.8" fill="#dcdcdc" stroke="#333" stroke-width="2"/>
<rect x="3085.1" y="2124.1" width="19.9" height="26" fill="#b9b9b9"/>
<path d="M3088 2137.2L3105 2137.2" stroke="#ededed" stroke-width="2" fill="none" />
<circle cx="3084.8" cy="2137.2" r="3.8" fill="#aaa" stroke="#ededed" stroke-width="2"/>
<rect x="3137" y="2129.5" width="20" height="20.2" fill="#a2a2a2"/>
<path d="M3140 2129.1L3157 2129.1" stroke="#333" stroke-width="2.2" fill="none" />
<circle cx="3136.8" cy="2129.1" r="3.8" fill="#dcdcdc" stroke="#333" stroke-width="2"/>
<text x="3018.38" y="2192" font-size="21.8" fill="#444" textLength="30.68" lengthAdjust="spacingAndGlyphs">Fill</text>
<rect x="3057.2" y="2172.1" width="23.8" height="23.7" fill="#d2d2d2" rx="5.5"/>
<text x="3104.86" y="2192" font-size="21.8" fill="#444" textLength="54.86" lengthAdjust="spacingAndGlyphs">Mask</text>
<defs><linearGradient id="cb" x1="0" y1="0" x2="0" y2="1"><stop offset="0" stop-color="#3d7df8"/><stop offset="1" stop-color="#2762e4"/></linearGradient></defs>
<rect x="3169.1" y="2172.1" width="23.9" height="23.7" fill="url(#cb)" rx="5.5"/>
<path d="M3174.6 2184.8L3179.6 2190.2L3187.8 2178.2" fill="none" stroke="#fff" stroke-width="3.2" stroke-linecap="round" stroke-linejoin="round"/>
<text x="156.62" y="2218.2" font-size="26.5" fill="#e6e6e6" textLength="107.3" lengthAdjust="spacingAndGlyphs">Features</text>
<path d="M287.4 2206.4L293.4 2212.8L299.4 2206.4" fill="none" stroke="#e6e6e6" stroke-width="2.6" stroke-linecap="round" stroke-linejoin="round"/>
<path d="M338.2 2207.4Q355.5 2184 372.8 2207.4Q355.5 2230.8 338.2 2207.4Z" fill="none" stroke="#3478f6" stroke-width="2.6" stroke-linejoin="round"/>
<circle cx="355.5" cy="2207.4" r="7.6" fill="#3478f6"/>
<circle cx="355.5" cy="2207.4" r="2.6" fill="#0e0e0e"/>
<path d="M447 2210.4L455.6 2210.4" stroke="#e6e6e6" stroke-width="2.4" fill="none" />
<path d="M514.6 2204.4L521 2211L527.4 2204.4" fill="none" stroke="#e6e6e6" stroke-width="2.6" stroke-linecap="round" stroke-linejoin="round"/>
<circle cx="573" cy="2207" r="15.4" fill="none" stroke="#3478f6" stroke-width="2.4"/>
<path d="M562.1 2217.9A15.4 15.4 0 0 0 583.9 2196.1Z" fill="#3478f6"/>
<path d="M616.6 2193H635V2199.2H623.4V2204.6H633.6V2210.6H623.4V2224.9H616.6Z" fill="#9a9a9a"/>
<rect x="680" y="2204" width="120" height="6.8" fill="#2b2b2b" rx="3.4"/>
<circle cx="676" cy="2207" r="16.2" fill="#8e8e8e"/>
<rect x="2538.1" y="2196.9" width="16" height="4.1" fill="#3478f6"/>
<rect x="2544" y="2196.9" width="4.1" height="21.9" fill="#3478f6"/>
<circle cx="2558.2" cy="2211.2" r="6.05" fill="none" stroke="#3478f6" stroke-width="3.5"/>
<path d="M2561.6 2200.1L2568 2195.2V2197.3H2572.2V2202.9H2568V2204.9Z" fill="#3478f6"/>
<rect x="2606" y="2196.1" width="6.1" height="9.8" fill="#3478f6"/>
<rect x="2613.9" y="2196.1" width="18.3" height="4" fill="#3478f6"/>
<rect x="2613.9" y="2202.1" width="8.2" height="3.8" fill="#3478f6"/>
<rect x="2606" y="2208.1" width="11.9" height="3.8" fill="#3478f6"/>
<rect x="2620" y="2208.1" width="8.1" height="3.8" fill="#3478f6"/>
<rect x="2606" y="2214" width="16.1" height="3.9" fill="#3478f6"/>
<rect x="2651" y="2196.1" width="26" height="3.9" fill="#a0a0a0"/>
<rect x="2658.9" y="2202.1" width="18.1" height="3.9" fill="#a0a0a0"/>
<rect x="2663.1" y="2208.1" width="13.9" height="3.9" fill="#a0a0a0"/>
<rect x="2652.9" y="2214" width="24.1" height="3.9" fill="#a0a0a0"/>
<rect x="2692.9" y="2195" width="4" height="23.8" fill="#a0a0a0"/>
<rect x="2699" y="2195" width="4" height="17.8" fill="#a0a0a0"/>
<rect x="2705" y="2195" width="4" height="23.8" fill="#a0a0a0"/>
<rect x="2711" y="2195" width="4" height="21.9" fill="#a0a0a0"/>
<path d="M2755.5 2208.2L2774 2208.2" stroke="#9a9a9a" stroke-width="1.8" fill="none" />
<text x="2806.09" y="2217.8" font-size="24.2" fill="#e6e6e6" textLength="75.05" lengthAdjust="spacingAndGlyphs">423 pt</text>
<path d="M2913.8 2208.2H2932.2M2923 2199.2V2217.2" fill="none" stroke="#9a9a9a" stroke-width="1.8"/>
</g>
</svg>
</body></html>
